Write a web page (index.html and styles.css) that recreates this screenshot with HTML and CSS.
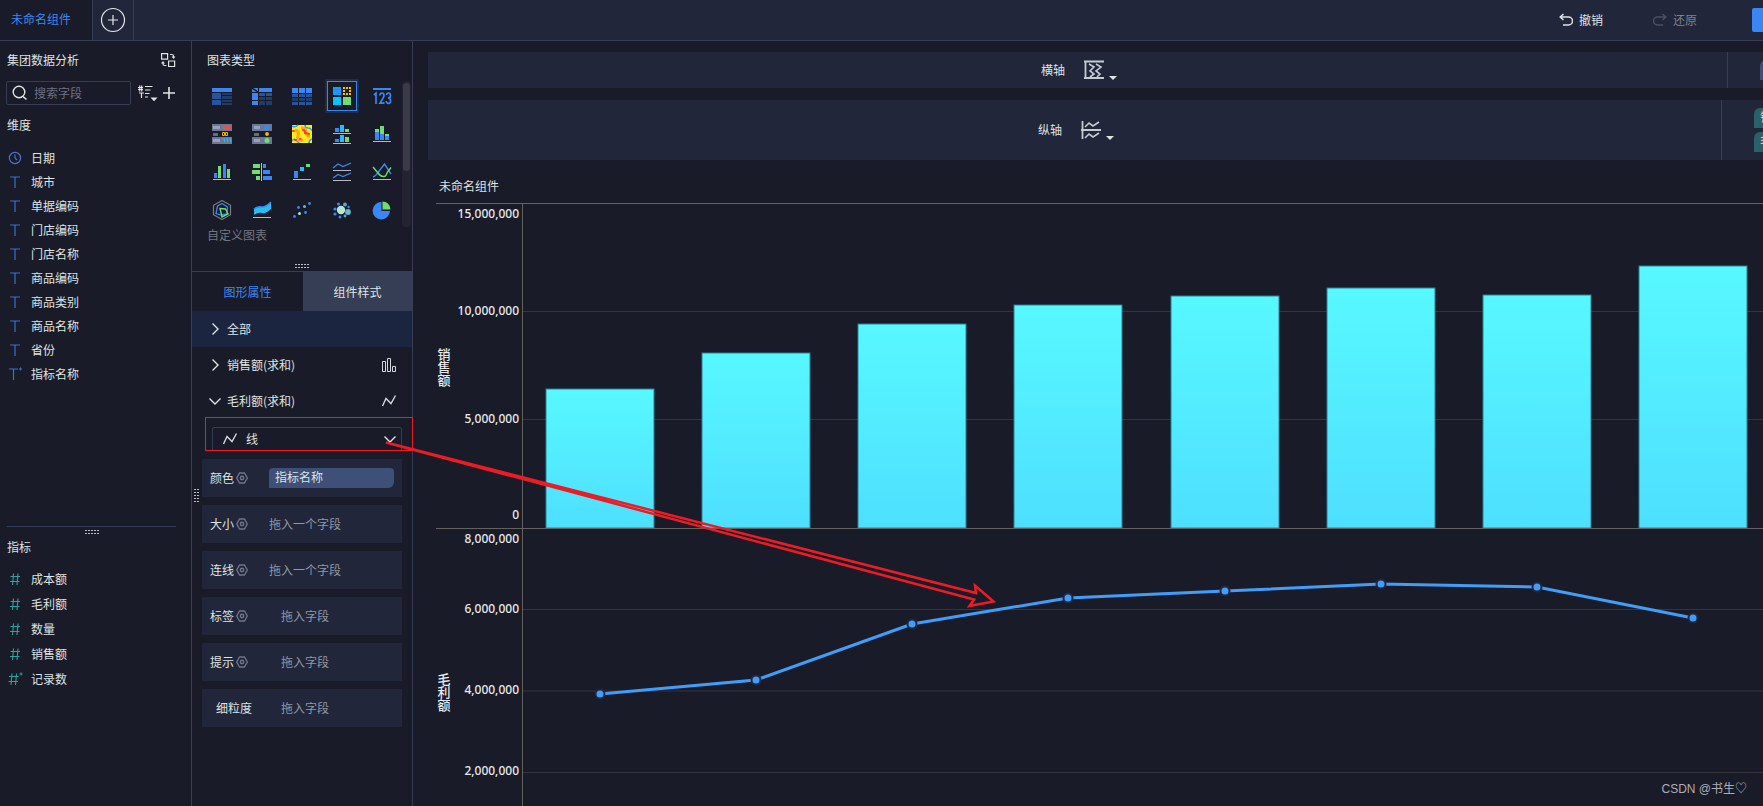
FILE: index.html
```html
<!DOCTYPE html>
<html lang="zh-CN">
<head>
<meta charset="utf-8">
<title>未命名组件</title>
<link rel="stylesheet" href="styles.css">
</head>
<body>
<svg class="defs" aria-hidden="true">
  <defs>
    <symbol id="i-text" viewBox="0 0 16 16"><path d="M3 3h10M8 3v11" fill="none" stroke="#3d6fd0" stroke-width="1.200"/></symbol>
    <symbol id="i-text-star" viewBox="0 0 16 16"><path d="M2 3h9M6.500 3v11" fill="none" stroke="#3d6fd0" stroke-width="1.200"/><path d="M13.500 1.500v3M12 3h3" stroke="#3d6fd0"/></symbol>
    <symbol id="i-num" viewBox="0 0 16 16"><path d="M3.500 5.500h9.500M3 10.500h9.500M6.500 2.500l-1 11.500M11 2.500l-1 11.500" fill="none" stroke="#2ba39a" stroke-width="1.100"/></symbol>
    <symbol id="i-num-star" viewBox="0 0 16 16"><path d="M2 5.500h9.500M1.500 10.500H11M5 2.500L4 14M9.500 2.500l-1 11.500" fill="none" stroke="#2ba39a" stroke-width="1.100"/><path d="M14 1.500v3M12.500 3h3" stroke="#2ba39a"/></symbol>
    <symbol id="i-gear" viewBox="0 0 12 12"><path d="M3.500 1h5L11.300 6 8.500 11h-5L.7 6z" fill="none" stroke="#70768a" stroke-width="1.400" stroke-linejoin="round"/><circle cx="6" cy="6" r="1.700" fill="none" stroke="#70768a" stroke-width="1.400"/></symbol>
    <symbol id="i-line" viewBox="0 0 16 16"><path d="M1.500 13L5 5.500l5 5L14.500 2.500" fill="none" stroke="#d3d8de" stroke-width="1.400"/></symbol>
    <linearGradient id="bar-fill" x1="0" y1="0" x2="0" y2="1"><stop offset="0" stop-color="#57f8ff"/><stop offset="1" stop-color="#4edfff"/></linearGradient>
  </defs>
</svg>

<header class="topbar">
  <button class="doc-tab" type="button">未命名组件</button>
  <button class="add-tab" type="button" aria-label="新建组件">
    <svg width="26" height="26" viewBox="0 0 26 26"><circle cx="13" cy="13" r="11.500" fill="none" stroke="#e4e7ea" stroke-width="1.200"/><path d="M8 13h10M13 8v10" stroke="#e4e7ea" stroke-width="1.200"/></svg>
  </button>
  <div class="history">
    <button class="history-btn" type="button">
      <svg width="14" height="14" viewBox="0 0 14 14"><path d="M4.500 1L1.200 4l3.300 3M1.500 4H9.500a3.600 3.600 0 0 1 0 8H4" fill="none" stroke="#dfe3e2" stroke-width="1.500"/></svg>撤销</button>
    <button class="history-btn is-off" type="button">
      <svg width="14" height="14" viewBox="0 0 14 14"><path d="M9.500 1l3.300 3-3.300 3M12.500 4H4.500a3.600 3.600 0 0 0 0 8H10" fill="none" stroke="#4a5064" stroke-width="1.500"/></svg>还原</button>
  </div>
  <button class="primary" type="button" aria-label="进入仪表板"></button>
</header>

<div class="workspace">
  <aside class="fields">
    <section class="dims">
      <div class="source">
        <span>集团数据分析</span>
        <button class="icon-btn" type="button" aria-label="切换数据集"><svg width="16" height="16" viewBox="0 0 16 16"><path d="M1.600 1.600h6v5.500h-6zM8.600 9h6v5.500h-6z" fill="none" stroke="#dfe3e2" stroke-width="1.200"/><path d="M10 2.500h2q1.500 0 1.500 1.500v1M3 10.500v1.500q0 1.500 1.500 1.500h2" fill="none" stroke="#dfe3e2" stroke-width="1.200"/><path d="M11.500 4.500h4l-2 2.500zM1 11.500h4L3 9z" fill="#dfe3e2"/></svg></button>
      </div>
      <div class="search-row">
        <label class="search">
          <svg width="16" height="16" viewBox="0 0 16 16"><circle cx="7" cy="7" r="5.800" fill="none" stroke="#dfe3e2" stroke-width="1.400"/><path d="M11 11.500l3.500 3" stroke="#dfe3e2" stroke-width="1.600"/></svg>
          <input type="text" placeholder="搜索字段" aria-label="搜索字段">
        </label>
        <button class="icon-btn" type="button" aria-label="排序"><svg width="20" height="18" viewBox="0 0 20 18"><path d="M0 3.500h5M0 5.500h5M1.700 1.500v6M3.700 1.500v6M1 9h5M3.500 9v5M7 2.500h7.500M7 6h5.500M7 9.500h4.500M7 13h3" stroke="#dfe3e2" stroke-width="1.200" fill="none"/><path d="M12.500 13.500h7L16 17.300z" fill="#dfe3e2"/></svg></button>
        <button class="icon-btn" type="button" aria-label="添加字段"><svg width="14" height="14" viewBox="0 0 14 14"><path d="M1 7h12M7 1v12" stroke="#dfe3e2" stroke-width="1.600"/></svg></button>
      </div>
      <h2 class="group-title">维度</h2>
      <ul class="field-list">
        <li><svg class="fi" viewBox="0 0 16 16"><circle cx="8" cy="8" r="5.600" fill="none" stroke="#4a74cc" stroke-width="1.200"/><path d="M8 4.500V8l2 2.200" fill="none" stroke="#4a74cc" stroke-width="1.200"/></svg>日期</li>
        <li><svg class="fi"><use href="#i-text"/></svg>城市</li>
        <li><svg class="fi"><use href="#i-text"/></svg>单据编码</li>
        <li><svg class="fi"><use href="#i-text"/></svg>门店编码</li>
        <li><svg class="fi"><use href="#i-text"/></svg>门店名称</li>
        <li><svg class="fi"><use href="#i-text"/></svg>商品编码</li>
        <li><svg class="fi"><use href="#i-text"/></svg>商品类别</li>
        <li><svg class="fi"><use href="#i-text"/></svg>商品名称</li>
        <li><svg class="fi"><use href="#i-text"/></svg>省份</li>
        <li><svg class="fi"><use href="#i-text-star"/></svg>指标名称</li>
      </ul>
    </section>
    <section class="measures">
      <span class="grip"></span>
      <h2 class="group-title">指标</h2>
      <ul class="field-list">
        <li><svg class="fi"><use href="#i-num"/></svg>成本额</li>
        <li><svg class="fi"><use href="#i-num"/></svg>毛利额</li>
        <li><svg class="fi"><use href="#i-num"/></svg>数量</li>
        <li><svg class="fi"><use href="#i-num"/></svg>销售额</li>
        <li><svg class="fi"><use href="#i-num-star"/></svg>记录数</li>
      </ul>
    </section>
  </aside>

  <aside class="config">
    <section class="types">
      <h2 class="types-title">图表类型</h2>
      <div class="types-body">
        <div class="type-grid">
          <button type="button" aria-label="分组表"><svg viewBox="0 0 20 20"><path fill="#3a87f3" d="M0 2h20v4H0z"/><path fill="#28549a" d="M0 7h9v6H0zM0 14h9v5H0z"/><path fill="#203c69" d="M10 7h10v2H10zM10 10h10v3H10zM10 14h10v2H10zM10 17h10v2H10z"/></svg></button>
          <button type="button" aria-label="交叉表"><svg viewBox="0 0 20 20"><path fill="#3a87f3" d="M0 2h6v4H0zM7 2h13v4H7zM0 7h6v7H0zM0 15h6v4H0z"/><path stroke="#1a1b29" stroke-width="1.500" d="M0 2l6 4"/><path fill="#28549a" d="M7 7h6v3H7zM14 7h6v3h-6z"/><path fill="#203c69" d="M7 11h6v3H7zM14 11h6v3h-6zM7 15h6v4H7zM14 15h6v4h-6z"/></svg></button>
          <button type="button" aria-label="明细表"><svg viewBox="0 0 20 20"><path fill="#3a87f3" d="M0 2h6v5H0zM7 2h6v5H7zM14 2h6v5h-6z"/><path fill="#28549a" d="M0 8h6v3H0zM7 8h6v3H7zM14 8h6v3h-6zM0 16h6v3H0zM7 16h6v3H7zM14 16h6v3h-6z"/><path fill="#203c69" d="M0 12h6v3H0zM7 12h6v3H7zM14 12h6v3h-6z"/></svg></button>
          <button class="is-on" type="button" aria-label="自定义图表" aria-pressed="true"><svg viewBox="0 0 20 20"><path fill="#0aa0fa" d="M1 1h8v8H1z"/><path fill="#3a87f3" d="M3 3h4v4H3z"/><path fill="#ffc300" d="M11 1h2v2h-2zM14 1h2v2h-2zM17 1h2v2h-2zM11 4h2v2h-2zM17 4h2v2h-2zM11 7h2v2h-2zM14 7h2v2h-2zM17 7h2v2h-2z"/><path fill="#04c4f8" d="M1 11h8v8H1z"/><path fill="#6ddd74" d="M11 11h8v8h-8z"/></svg></button>
          <button type="button" aria-label="指标卡"><svg viewBox="0 0 20 20"><path fill="#3a87f3" d="M1 2h18v2H1z"/><path d="M2 9l2-1.800V18M8 9.500q0-2.500 2-2.500t2 2.500q0 1.500-4 7.700h4.500M14.500 9q.3-2 2-2 2 0 2 2.500T16 12q2.600 0 2.600 2.700T16.500 17.300q-2 0-2.200-2.300" fill="none" stroke="#3a87f3" stroke-width="1.700"/></svg></button>

          <button type="button" aria-label="颜色表格"><svg viewBox="0 0 20 20"><path fill="#6b7796" d="M0 0h20v7H0zM0 13h20v7H0z"/><path fill="#98a1b8" d="M1 2h7v3H1zM1 15h7v3H1z"/><path fill="#666a79" d="M1 9h5v3H1z"/><path d="M11.500 1.500v4M13 2h2v3h-2zM16 2h2v3h-2z" fill="none" stroke="#e4544f" stroke-width="1.300"/><path d="M10.500 8.500h2v3h-2zM13.500 8.500h2v3h-2z" fill="none" stroke="#f5b400"/><path d="M10.500 15h2v3M14 15h1.500v3M17 15h1.500v3" fill="none" stroke="#27b7ea" stroke-width="1.200"/></svg></button>
          <button type="button" aria-label="图标表格"><svg viewBox="0 0 20 20"><path fill="#6b7796" d="M0 0h20v7H0zM0 13h20v7H0z"/><path fill="#98a1b8" d="M2 2h6v3H2zM2 15h6v3H2z"/><path fill="#666a79" d="M2 9h5v3H2z"/><ellipse cx="15" cy="3.500" rx="3" ry="2.600" fill="#3a87f3"/><circle cx="15" cy="10" r="1.900" fill="#ffb400"/><circle cx="15" cy="16.500" r="2.500" fill="#6ddd74"/></svg></button>
          <button type="button" aria-label="热力区域图"><svg viewBox="0 0 20 20"><path fill="#ffee16" d="M0 1h20v18H0z"/><path fill="none" stroke="#35a2f5" stroke-width="1.600" d="M0 2q3 2 6-1M0 17q2-3 4-1t3 3M13 1q0 3 3 3t4 3M17 19q0-3 3-4"/><path fill="none" stroke="#ffa51e" stroke-width="3" d="M3 6q5 1 3 6t5 4M9 4q5 0 5 4t4 4"/><path fill="none" stroke="#ff3b2d" stroke-width="2" stroke-linecap="round" d="M11 6q2 0 2 3l4 1M3 16h1M8 15h.500M1 7h1"/></svg></button>
          <button type="button" aria-label="分区柱形图"><svg viewBox="0 0 20 20"><path fill="#3a87f3" d="M3 4h4v4H3zM3 15h4v3H3z"/><path fill="#25bff5" d="M8 1h4v7H8zM8 11h4v7H8z"/><path fill="#6ddd74" d="M13 5h4v3h-4zM13 13h4v5h-4z"/><path fill="#b5bac3" d="M1 9h18v1H1zM1 19h18v1H1z"/></svg></button>
          <button type="button" aria-label="堆积柱形图"><svg viewBox="0 0 20 20"><path fill="#3a87f3" d="M3 8h4v8H3zM8 10h4v6H8zM13 12h4v4h-4z"/><path fill="#6ddd74" d="M3 5h4v3H3zM8 2h4v8H8zM13 10h4v2h-4z"/><path fill="#b5bac3" d="M1 17h18v1H1z"/></svg></button>

          <button type="button" aria-label="多系列柱形图"><svg viewBox="0 0 20 20"><path fill="#3a87f3" d="M2 11h3v5H2zM11 2h3v14h-3z"/><path fill="#6ddd74" d="M6 4h3v12H6zM15 7h3v9h-3z"/><path fill="#b5bac3" d="M1 17h18v1H1z"/></svg></button>
          <button type="button" aria-label="对比柱形图"><svg viewBox="0 0 20 20"><path fill="#6ddd74" d="M1 2h7v4H1zM0 8h8v4H0zM4 14h4v4H4z"/><path fill="#3a87f3" d="M11 2h3v4h-3zM11 8h7v4h-7zM11 14h9v4h-9z"/><path fill="#b5bac3" d="M9 1h1v18H9z"/></svg></button>
          <button type="button" aria-label="瀑布图"><svg viewBox="0 0 20 20"><path fill="#3a87f3" d="M2 9h4v7H2z"/><path fill="#25bff5" d="M8 5h4v4H8z"/><path fill="#6ddd74" d="M14 2h4v3h-4z"/><path fill="#b5bac3" d="M1 17h18v1H1z"/></svg></button>
          <button type="button" aria-label="分区折线图"><svg viewBox="0 0 20 20"><path d="M1 6l5-4 5 2.500L19 1M1 16l5-3.500 5 2L19 11" fill="none" stroke="#3a87f3" stroke-width="1.300"/><path fill="#b5bac3" d="M1 8h18v1H1zM1 18h18v1H1z"/></svg></button>
          <button type="button" aria-label="折线图"><svg viewBox="0 0 20 20"><path d="M1 15q2.500-.5 5-4.500L12.500 2 19 12" fill="none" stroke="#3a87f3" stroke-width="1.400"/><path d="M1 5l5 6q3 4 6 3.500 2 0 3.500-4.500L19 5.500" fill="none" stroke="#6ddd74" stroke-width="1.400"/><path fill="#b5bac3" d="M1 17h18v1H1z"/></svg></button>

          <button type="button" aria-label="雷达图"><svg viewBox="0 0 20 20"><path d="M10 .5l8.500 4.800v9.400L10 19.500l-8.500-4.800V5.300z" fill="none" stroke="#777b88" stroke-width="1.200"/><path d="M10 3.500L15.500 7l-.5 7-6 1-5-1.500L5.500 6z" fill="none" stroke="#3a87f3" stroke-width="1.300"/><path d="M8 8.500l5.500.5 2.500 5-6 3z" fill="none" stroke="#6ddd74" stroke-width="1.400"/></svg></button>
          <button type="button" aria-label="面积图"><svg viewBox="0 0 20 20"><path d="M2 9q4-3 8-2 4 0 9-5v7q-5 5-9 4-4-1-8 2z" fill="#25bff5"/><path d="M2 9q4-3 8-2 4 0 9-5" fill="none" stroke="#3a87f3" stroke-width="1.500"/><path fill="#b5bac3" d="M1 17h18v1H1z"/></svg></button>
          <button type="button" aria-label="散点图"><svg viewBox="0 0 20 20"><g fill="#3a87f3"><circle cx="2.500" cy="16.500" r="1.400"/><circle cx="6.500" cy="7.500" r="1.400"/><circle cx="13.500" cy="12.500" r="1.400"/><circle cx="17.500" cy="3.500" r="1.400"/></g><circle cx="7.500" cy="13.500" r="1.500" fill="#a9e8d0"/><circle cx="12.500" cy="6.500" r="1.500" fill="#68b9cf"/></svg></button>
          <button type="button" aria-label="聚合气泡图"><svg viewBox="0 0 20 20"><circle cx="9" cy="10" r="4.200" fill="#b3e9d4"/><circle cx="16" cy="12" r="2.900" fill="#68b9cf"/><g fill="#5aa7cc"><circle cx="13" cy="4.500" r="2"/><circle cx="13" cy="16" r="1.400"/></g><g fill="#3a87f3"><circle cx="6.500" cy="4" r="1.500"/><circle cx="3" cy="9" r="1.600"/><circle cx="3" cy="14" r="1.600"/><circle cx="8" cy="17" r="1.500"/><circle cx="16.500" cy="7" r="1.200"/></g></svg></button>
          <button type="button" aria-label="饼图"><svg viewBox="0 0 20 20"><path d="M9.500 2v9H18A8.700 8.700 0 1 1 9.500 2z" fill="#3a87f3"/><path d="M10.500 1.500a8 8 0 0 1 8 8h-8z" fill="#6ddd74"/></svg></button>
        </div>
        <div class="scroll"><span class="thumb"></span></div>
      </div>
      <p class="types-note">自定义图表</p>
      <span class="grip"></span>
    </section>

    <div class="prop-tabs">
      <button class="is-on" type="button">图形属性</button>
      <button type="button">组件样式</button>
    </div>
    <button class="acc is-all" type="button"><svg class="chev" viewBox="0 0 12 12"><path d="M3.500.500l5.500 5.500-5.500 5.500"/></svg><span>全部</span></button>
    <button class="acc" type="button"><svg class="chev" viewBox="0 0 12 12"><path d="M3.500.500l5.500 5.500-5.500 5.500"/></svg><span>销售额(求和)</span>
      <svg class="acc-icon" viewBox="0 0 16 16"><path d="M1.500 4.500h3v10h-3zM6.500 1.500h3v13h-3zM11.500 9.500h3v5h-3z" fill="none" stroke="#d3d8de"/></svg></button>
    <button class="acc" type="button"><svg class="chev" viewBox="0 0 12 12"><path d="M.5 3.500L6 9l5.500-5.500"/></svg><span>毛利额(求和)</span>
      <svg class="acc-icon"><use href="#i-line"/></svg></button>

    <div class="shape">
      <svg class="shape-icon"><use href="#i-line"/></svg>
      <select aria-label="图形"><option>线</option></select>
      <svg class="chev" viewBox="0 0 12 12"><path d="M.5 3.500L6 9l5.500-5.500"/></svg>
    </div>

    <div class="slots">
      <div class="slot"><span class="slot-name">颜色<svg class="gear"><use href="#i-gear"/></svg></span><span class="chip">指标名称</span></div>
      <div class="slot"><span class="slot-name">大小<svg class="gear"><use href="#i-gear"/></svg></span><span class="hint">拖入一个字段</span></div>
      <div class="slot"><span class="slot-name">连线<svg class="gear"><use href="#i-gear"/></svg></span><span class="hint">拖入一个字段</span></div>
      <div class="slot"><span class="slot-name">标签<svg class="gear"><use href="#i-gear"/></svg></span><span class="hint is-in">拖入字段</span></div>
      <div class="slot"><span class="slot-name">提示<svg class="gear"><use href="#i-gear"/></svg></span><span class="hint is-in">拖入字段</span></div>
      <div class="slot"><span class="slot-name is-in">细粒度</span><span class="hint is-in">拖入字段</span></div>
    </div>
    <span class="grip is-side"></span>
  </aside>

  <main class="stage">
    <div class="shelf">
      <div class="shelf-head">
        <span>横轴</span>
        <button class="axis-btn" type="button" aria-label="横轴设置"><svg width="34" height="22" viewBox="0 0 34 22"><path d="M0 2.500h20M0 19h20M1.500 2.500V19" stroke="#c5cbcf" stroke-width="1.800" fill="none"/><path d="M5 5l5 3-4 4 4 3-4 3M12 5l5 3-5 4 4 3-3 3" stroke="#c5cbcf" stroke-width="1.600" fill="none"/><path d="M25 17h8l-4 4z" fill="#dfe3e2"/></svg></button>
      </div>
      <div class="drop"><span class="pill is-dim" role="img" aria-label="指标名称"></span></div>
    </div>
    <div class="shelf is-tall">
      <div class="shelf-head">
        <span>纵轴</span>
        <button class="axis-btn" type="button" aria-label="纵轴设置"><svg width="34" height="22" viewBox="0 0 34 22"><path d="M0 11h20M1.500 2v18" stroke="#c5cbcf" stroke-width="1.800" fill="none"/><path d="M4 8l4-4 4 3 6-4M4 19l4-4 4 3 6-4" stroke="#c5cbcf" stroke-width="1.600" fill="none"/><path d="M25 17h8l-4 4z" fill="#dfe3e2"/></svg></button>
      </div>
      <div class="drop is-wide"><span class="pill">销售额(求和)</span><span class="pill">毛利额(求和)</span></div>
    </div>
    <h1 class="chart-title">未命名组件</h1>
    <svg class="chart" viewBox="0 0 1327 603" role="img" aria-label="销售额与毛利额">
      <path class="gridline" d="M87 108.500H1327M87 216.500H1327M87 406.500H1327M87 488H1327M87 569.500H1327"/>
      <g class="bars">
        <rect x="110" y="186" width="108" height="139"/>
        <rect x="266" y="150" width="108" height="175"/>
        <rect x="422" y="121" width="108" height="204"/>
        <rect x="578" y="102" width="108" height="223"/>
        <rect x="735" y="93" width="108" height="232"/>
        <rect x="891" y="85" width="108" height="240"/>
        <rect x="1047" y="92" width="108" height="233"/>
        <rect x="1203" y="63" width="108" height="262"/>
      </g>
      <path class="axis" d="M0 .5H1327M0 325.500H1327M86.500 0V603"/>
      <g class="ticks">
        <text x="83" y="15">15,000,000</text>
        <text x="83" y="112">10,000,000</text>
        <text x="83" y="220">5,000,000</text>
        <text x="83" y="316">0</text>
        <text x="83" y="340">8,000,000</text>
        <text x="83" y="410">6,000,000</text>
        <text x="83" y="491">4,000,000</text>
        <text x="83" y="572">2,000,000</text>
      </g>
      <text class="axis-name" x="8" y="164">销售额</text>
      <text class="axis-name" x="8" y="489">毛利额</text>
      <polyline class="series" points="164,491 320,477 476,421 632,395 789,388 945,381 1101,384 1257,415"/>
      <g class="dots">
        <circle cx="164" cy="491" r="4.500"/><circle cx="320" cy="477" r="4.500"/><circle cx="476" cy="421" r="4.500"/><circle cx="632" cy="395" r="4.500"/>
        <circle cx="789" cy="388" r="4.500"/><circle cx="945" cy="381" r="4.500"/><circle cx="1101" cy="384" r="4.500"/><circle cx="1257" cy="415" r="4.500"/>
      </g>
    </svg>
    <span class="watermark">CSDN @书生♡</span>
  </main>

  <svg class="callout" width="1000" height="620" viewBox="0 41 1000 620" aria-hidden="true">
    <rect x="205.500" y="417.500" width="207" height="33" stroke-width="1"/>
    <path d="M386 442.500L976 593l-1-7.500 18.500 16L969.500 606l4.500-6.500z" stroke-width="2.500"/>
  </svg>
</div>
</body>
</html>
```
FILE: styles.css
```css
* { box-sizing: border-box; }
body {
  margin: 0;
  min-height: 100vh;
  display: flex;
  flex-direction: column;
  overflow: hidden;
  background: #1a1b29;
  color: #dfe3e2;
  font: 12px/18px "Noto Sans CJK SC", sans-serif;
}
button, input, select { font: inherit; color: inherit; background: none; border: 0; padding: 0; margin: 0; }
h1, h2, p, ul { margin: 0; padding: 0; font-size: 12px; font-weight: 400; list-style: none; }
svg { display: block; flex: none; }
.defs { position: absolute; width: 0; height: 0; }

/* top bar */
.topbar { display: flex; align-items: center; height: 41px; flex: none; background: #21263b; border-bottom: 1px solid #363e56; overflow: hidden; }
.doc-tab { width: 93px; height: 40px; padding: 0 10px 2px 0; background: #1a1b29; border-right: 1px solid #363e56; color: #3a87f3; }
.add-tab { display: flex; align-items: center; justify-content: center; width: 41px; height: 40px; border-right: 1px solid #363e56; }
.history { display: flex; gap: 50px; margin-left: auto; margin-right: 55px; }
.history-btn { display: flex; align-items: center; gap: 6px; }
.is-off { color: #7c8194; }
.primary { width: 64px; height: 24px; margin-right: -53px; border-radius: 2px; background: #3a87f3; }

.workspace { position: relative; display: flex; flex: 1; }

/* field list */
.fields { display: flex; flex-direction: column; width: 192px; flex: none; border-right: 1px solid #363e56; }
.dims { flex: 1; }
.source { display: flex; align-items: center; justify-content: space-between; height: 40px; padding: 0 15px 2px 7px; }
.icon-btn { display: flex; }
.search-row { display: flex; align-items: center; gap: 4px; padding-left: 6px; }
.search { display: flex; align-items: center; gap: 6px; width: 125px; height: 24px; margin-right: 3px; padding-left: 5px; border: 1px solid #363e56; border-radius: 2px; }
.search input { width: 90px; outline: 0; }
.search input::placeholder { color: #6c7082; opacity: 1; }
.group-title { height: 41px; padding-left: 7px; line-height: 40px; }
.field-list li { display: flex; align-items: center; gap: 8px; height: 24px; padding-left: 7px; }
.fi { width: 16px; height: 16px; }
.measures { height: 280px; }
.measures::before { content: ""; display: block; height: 1px; margin: 0 15px 0 7px; background: #363e56; }
.measures .grip { margin: 3px 0 0 85px; }
.measures .group-title { height: 32px; line-height: 26px; }
.measures li { height: 25px; }
.grip {
  display: block;
  width: 14px;
  height: 4px;
  background: repeating-linear-gradient(90deg, #b9bdc4 0 2px, transparent 2px 3px);
  mask: repeating-linear-gradient(#000 0 1px, transparent 1px 3px);
}

/* chart configuration */
.config { position: relative; width: 221px; flex: none; border-right: 1px solid #363e56; }
.types { height: 231px; border-bottom: 1px solid #363e56; }
.types-title { padding-left: 15px; line-height: 38px; }
.types-body { display: flex; padding-left: 10px; }
.type-grid { display: grid; grid-template-columns: repeat(5, 40px); grid-auto-rows: 34px; row-gap: 4px; }
.type-grid button { display: flex; align-items: center; justify-content: center; }
.type-grid svg { width: 20px; height: 20px; }
.type-grid .is-on { width: 30px; height: 30px; place-self: center; border: 1px solid #3a87f3; box-shadow: 0 0 0 2px #1d2c49; }
.scroll { width: 9px; margin-top: 2px; padding: 2px 1px; border-radius: 4px; background: #222431; }
.thumb { display: block; height: 88px; border-radius: 4px; background: #393b48; }
.types-note { padding-left: 15px; line-height: 16px; color: #73757e; }
.types .grip { margin: 21px 0 0 103px; }
.is-side { position: absolute; left: 2px; top: 448px; width: 5px; height: 13px; }
.prop-tabs { display: grid; grid-template-columns: 111px 1fr; height: 39px; }
.prop-tabs button { background: #363e56; }
.prop-tabs .is-on { background: none; color: #3a87f3; }
.acc { display: flex; align-items: center; gap: 6px; width: 100%; height: 36px; padding: 0 15px 0 17px; }
.is-all { background: #1c2540; }
.chev { width: 12px; height: 12px; fill: none; stroke: #dfe3e2; stroke-width: 1.4; }
.acc-icon { width: 16px; height: 16px; margin-left: auto; }
.shape { display: flex; align-items: center; gap: 8px; height: 24px; margin: 8px 10px 8px 20px; padding: 0 5px 0 9px; border: 1px solid #363e56; border-radius: 2px; }
.shape-icon { width: 16px; height: 16px; }
.shape select { flex: 1; appearance: none; outline: 0; }
.slots { display: grid; gap: 8px; padding: 0 10px; }
.slot { display: flex; align-items: center; height: 38px; padding: 0 8px; background: #21263b; }
.slot-name { display: flex; align-items: center; gap: 2px; width: 59px; flex: none; }
.gear { width: 12px; height: 12px; }
.slot-name.is-in { padding-left: 6px; }
.chip { flex: 1; height: 20px; padding-left: 6px; border-radius: 4px 4px 6px 0; background: #3e5078; }
.hint { color: #9296a3; }
.hint.is-in { padding-left: 12px; }

/* stage */
.stage { position: relative; flex: 1; min-width: 0; padding-top: 11px; }
.shelf { display: flex; height: 36px; margin: 0 0 12px 15px; background: #21263b; overflow: hidden; }
.shelf.is-tall { height: 60px; margin-bottom: 0; }
.shelf-head { display: flex; flex: 1; align-items: center; justify-content: center; gap: 19px; padding-left: 4px; }
.axis-btn { display: flex; }
.drop { display: flex; flex-direction: column; justify-content: center; gap: 4px; width: 36px; padding-left: 32px; border-left: 1px solid #363e56; }
.drop.is-wide { width: 42px; }
.pill { width: 160px; height: 20px; padding-left: 6px; border-radius: 6px 4px 4px 0; background: #2a6068; }
.pill.is-dim { background: #3e5078; }
.chart-title { padding: 17px 0 8px 26px; }
.chart { width: calc(100% - 23px); height: auto; margin-left: 23px; }
.gridline { stroke: #34353e; fill: none; }
.axis { stroke: #62635f; fill: none; }
.bars { fill: url(#bar-fill); stroke: #2d8094; stroke-width: 1; }
.ticks { fill: #e8eaec; font: 500 12px "Noto Sans", sans-serif; text-anchor: end; }
.axis-name { fill: #e8eaec; font-size: 13px; font-weight: 500; writing-mode: vertical-rl; text-anchor: middle; }
.series { fill: none; stroke: #409ef8; stroke-width: 3; }
.dots { fill: #409ef8; stroke: #1f2744; stroke-width: 2; }
.watermark { position: absolute; right: 16px; bottom: 7px; color: #adadb2; font: 12px/20px "Liberation Sans", "Noto Sans CJK SC", sans-serif; }
.callout { position: absolute; left: 0; top: 0; fill: none; stroke: #ed1c24; pointer-events: none; }
```
